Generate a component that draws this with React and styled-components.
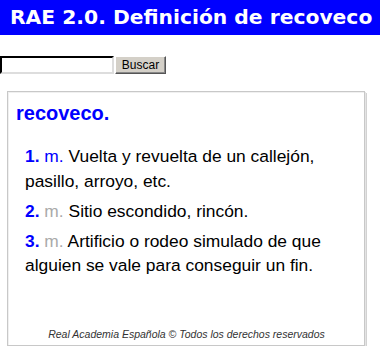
import React from "react";
import styled, { createGlobalStyle } from "styled-components";

const GlobalStyle = createGlobalStyle`
  html, body { margin: 0; padding: 0; background: #fff; }
  body { font-family: "Liberation Sans", Arial, sans-serif; }
`;

const Header = styled.h1`
  margin: 0;
  height: 35px;
  line-height: 35px;
  padding-left: 10px;
  background: #0000ff;
  color: #fff;
  font-family: "DejaVu Sans", Verdana, sans-serif;
  font-weight: bold;
  font-size: 20.3px;
  white-space: nowrap;
  overflow: hidden;
`;

const SearchForm = styled.form`
  display: flex;
  align-items: flex-start;
  gap: 1px;
  margin-top: 21px;
`;

const SearchInput = styled.input`
  box-sizing: border-box;
  width: 114px;
  height: 18px;
  margin: 0;
  padding: 0 2px;
  border: 2px inset #eee;
  border-top-color: #555;
  border-left-color: #555;
  border-right-color: #ddd;
  border-bottom-color: #ddd;
  background: #fff;
  font: 12px "Liberation Sans", Arial, sans-serif;
`;

const SearchButton = styled.button`
  box-sizing: border-box;
  width: 51px;
  height: 18px;
  margin: 0;
  padding: 0;
  background: #d4d0c8;
  border: 1px solid;
  border-color: #fff #555 #555 #fff;
  box-shadow: inset -1px -1px 0 #888;
  color: #000;
  font: 12px "Liberation Sans", Arial, sans-serif;
  line-height: 14px;
`;

const Card = styled.div`
  box-sizing: border-box;
  display: flex;
  flex-direction: column;
  width: 358px;
  height: 255px;
  margin: 17px 0 0 7px;
  padding: 8px 7px 5px 8px;
  border: 1px solid #c8c8c8;
  box-shadow: inset 1px 1px 0 #f0f0f0, 1px 1px 0 #e4e4e4, 2px 2px 0 #d2d2d2;
  background: #fff;
`;

const Title = styled.h2`
  margin: 0 0 18px 0;
  color: #0000ff;
  font-size: 20px;
  font-weight: bold;
  line-height: 26px;
`;

const Definition = styled.p`
  margin: 0 0 5.5px 0;
  padding-left: 9px;
  font-size: 17.4px;
  line-height: 24.5px;
  color: #000;
`;

const Num = styled.span`
  color: #0000ff;
  font-weight: bold;
`;

const Abbr = styled.span`
  color: ${(p) => (p.$active ? "#0000ff" : "#aaaaaa")};
`;

const Footer = styled.div`
  margin-top: auto;
  text-align: center;
  font-size: 10.5px;
  font-style: italic;
  color: #333;
`;

const defs = [
  { n: "1.", abbr: "m.", active: true, text: "Vuelta y revuelta de un callejón, pasillo, arroyo, etc." },
  { n: "2.", abbr: "m.", active: false, text: "Sitio escondido, rincón." },
  { n: "3.", abbr: "m.", active: false, text: "Artificio o rodeo simulado de que alguien se vale para conseguir un fin." },
];

export default function App() {
  return (
    <>
      <GlobalStyle />
      <Header>RAE 2.0. Definición de recoveco</Header>
      <SearchForm onSubmit={(e) => e.preventDefault()}>
        <SearchInput type="text" />
        <SearchButton type="submit">Buscar</SearchButton>
      </SearchForm>
      <Card>
        <Title>recoveco.</Title>
        {defs.map((d) => (
          <Definition key={d.n}>
            <Num>{d.n}</Num> <Abbr $active={d.active}>{d.abbr}</Abbr> {d.text}
          </Definition>
        ))}
        <Footer>Real Academia Española © Todos los derechos reservados</Footer>
      </Card>
    </>
  );
}
